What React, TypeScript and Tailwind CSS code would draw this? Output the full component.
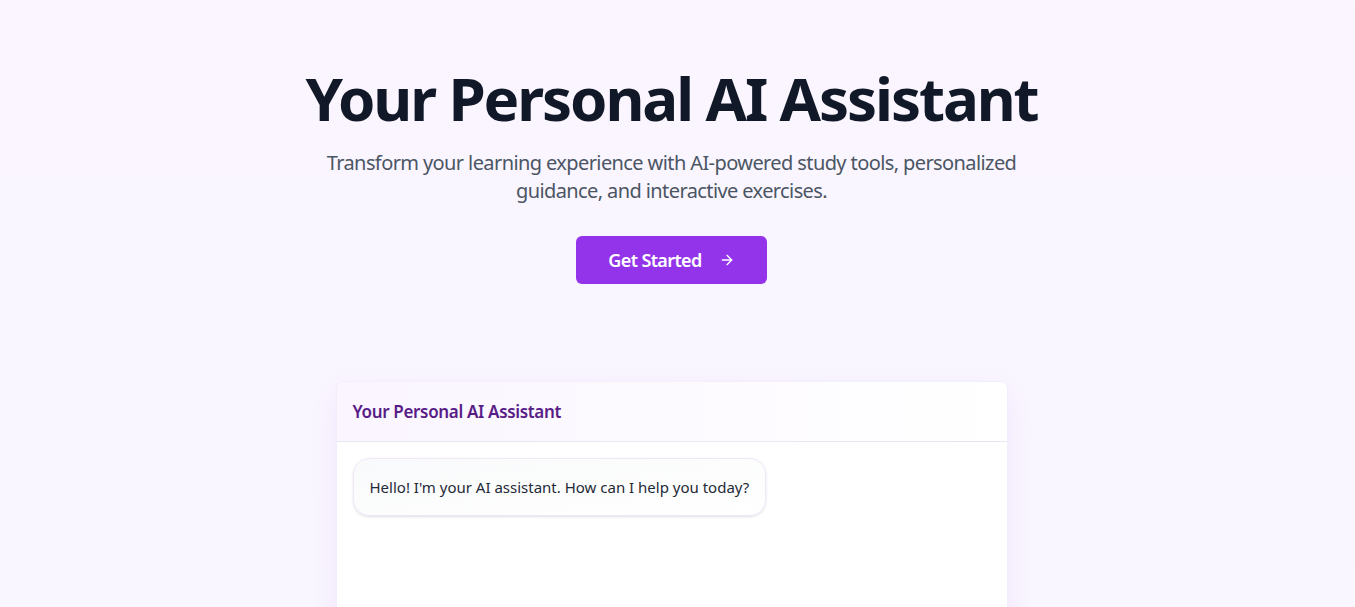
import React from "react";

export default function App() {
  return (
    <div
      className="min-h-screen bg-gradient-to-b from-[#faf5ff] to-[#f8f8ff] pb-[700px] pr-[12px]"
      style={{ fontFamily: '"Noto Sans", "Open Sans", sans-serif' }}
    >
      <section className="flex flex-col items-center px-4 pt-[68px] text-center">
        <h1 className="text-[60px] font-bold leading-none tracking-[-0.035em] text-[#111827]">
          Your Personal AI Assistant
        </h1>
        <p className="mt-[21px] max-w-[768px] text-[20px] leading-[28px] tracking-[-0.03em] text-[#4b5563]">
          Transform your learning experience with AI-powered study tools, personalized guidance, and interactive exercises.
        </p>
        <button className="mt-[31px] flex h-[48px] items-center gap-[17px] rounded-md bg-[#9333ea] px-8 text-[18px] font-semibold tracking-[-0.035em] text-white">
          Get Started
          <svg width="16" height="16" viewBox="0 0 24 24" fill="none" stroke="currentColor" strokeWidth="2" strokeLinecap="round" strokeLinejoin="round">
            <path d="M5 12h14" />
            <path d="m12 5 7 7-7 7" />
          </svg>
        </button>
      </section>

      <section className="mt-[97px] flex justify-center px-4">
        <div className="w-[672px] overflow-hidden rounded-lg border border-[#f3eefc] bg-white shadow-[0_10px_30px_-5px_rgba(147,51,234,0.12)]">
          <div className="flex h-[60px] items-center border-b border-[#e9e5f2] bg-gradient-to-r from-[#faf5ff] to-white px-4">
            <h2 className="text-[17px] font-semibold tracking-[-0.02em] text-[#581c87]">Your Personal AI Assistant</h2>
          </div>
          <div className="flex h-[560px] flex-col items-start p-4">
            <div className="rounded-2xl border border-[#efe8fb] bg-gradient-to-br from-[#f9fafb] to-white px-4 py-[17px] text-[15px] leading-[22px] text-[#1f2937] shadow-sm">
              Hello! I'm your AI assistant. How can I help you today?
            </div>
          </div>
        </div>
      </section>
    </div>
  );
}
